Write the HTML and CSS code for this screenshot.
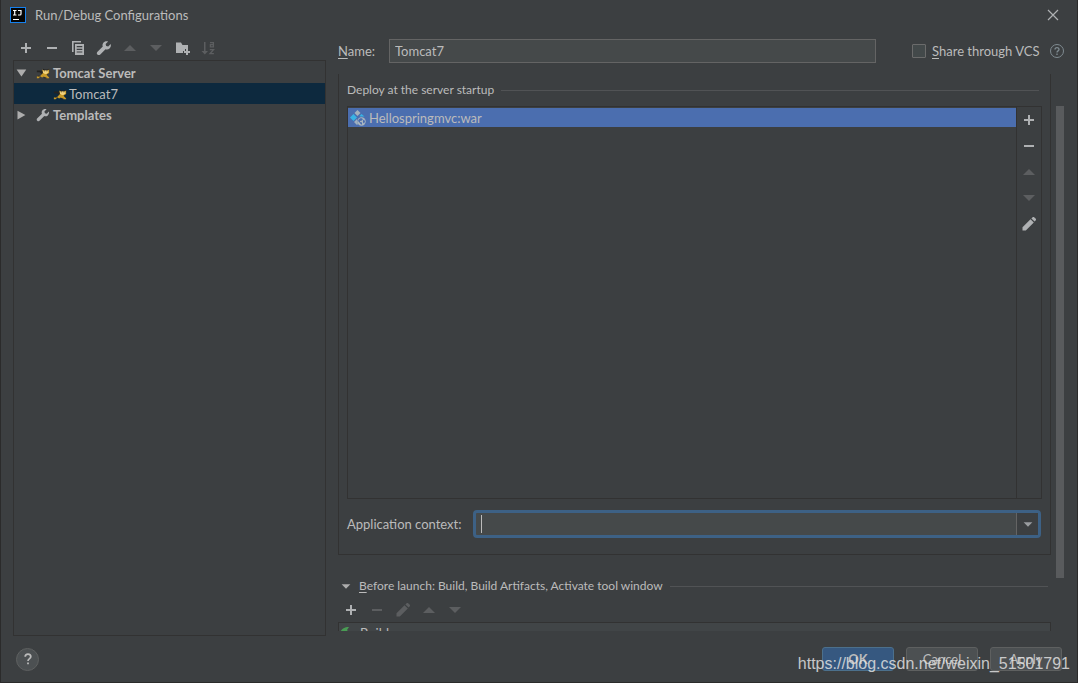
FILE: index.html
```html
<!DOCTYPE html>
<html lang="en">
<head>
<meta charset="utf-8">
<title>Run/Debug Configurations</title>
<link rel="stylesheet" href="styles.css">
</head>
<body>
<svg class="defs" aria-hidden="true">
  <symbol id="add" viewBox="0 0 16 16"><path d="M7 3h2v4h4v2H9v4H7V9H3V7h4z"/></symbol>
  <symbol id="remove" viewBox="0 0 16 16"><path d="M3 7h10v2H3z"/></symbol>
  <symbol id="up" viewBox="0 0 16 16"><path d="M8 5l6 6H2z"/></symbol>
  <symbol id="down" viewBox="0 0 16 16"><path d="M2 5h12l-6 6z"/></symbol>
  <symbol id="expanded" viewBox="0 0 16 16"><path d="M3 4h11l-5.500 8z"/></symbol>
  <symbol id="collapsed" viewBox="0 0 16 16"><path d="M4 3l9 5-9 5z"/></symbol>
  <symbol id="small-down" viewBox="0 0 16 16"><path d="M3 6h10l-5 5z"/></symbol>
  <symbol id="edit" viewBox="0 0 16 16"><path d="M1.500 11.200l8-8 3.300 3.300-8 8H1.500zM10.400 2.400l1-1c.6-.6 1.400-.6 2 0l1.200 1.200c.6.6.6 1.400 0 2l-1 1z"/></symbol>
  <symbol id="copy" viewBox="0 0 16 16"><path d="M2 1h9v1.600H3.600V12H2z"/><path fill-rule="evenodd" d="M5 4h9v11H5zM6.700 6v1.200h5.600V6zm0 2.700v1.200h5.600V8.700zm0 2.700v1.200h5.600v-1.200z"/></symbol>
  <symbol id="wrench" viewBox="0 0 16 16"><path d="M14.700 4.100l-2.500 2.400-2-.6-.6-2 2.500-2.500C10.100.8 8.200 1.400 7.200 2.900c-.8 1.200-.9 2.500-.4 3.700L1.500 11.700c-.9.900-.9 2-.1 2.800s2 .8 2.900-.1l5.200-5.200c1.400.5 2.900.3 4-.7 1.200-1.100 1.700-2.800 1.200-4.400z"/></symbol>
  <symbol id="folder" viewBox="0 0 16 16"><path d="M2 2.500h5L8.500 5H14v4h-3v2H9v2H2z"/><path d="M12 9h2v2h2v2h-2v2h-2v-2h-2v-2h2z"/></symbol>
  <symbol id="sort" viewBox="0 0 16 16"><path d="M4 2h1.500v9H8l-3.200 3.500L1.500 11H4z"/><path fill="none" stroke="currentColor" stroke-width="1.300" d="M10 2.600h3.400v4.200H10.400V4.700h3M9.800 9.700h3.700l-3.500 4h3.900"/></symbol>
  <symbol id="tomcat" viewBox="0 0 16 16"><path fill="#242321" d="M1 5h5l2 1V3l2 1h3l2-1v5l-2 2H8L4 7H1z"/><path fill="#c99a28" d="M7 4l2 1h4l2-1v4l-3 2 3 3v1h-3l-3-2-2 1-2-1-2 2H1v-2l4-1 3-3z"/><path fill="#f1d27c" d="M8 5h6v2l-2 2h-2L8 7z"/><path fill="#242321" d="M9 5h1v1H9zm3 0h1v1h-1zM2 11h3v1H2zm7 2h3v1H9z"/></symbol>
  <symbol id="artifact" viewBox="0 0 16 16"><path fill="#a4b1bb" d="M7.500 0l3 3-3 3-3-3z"/><path fill="#39b3e4" d="M3.500 4l3.500 3.500L3.500 11 0 7.500zM11.500 4l3 2.500h-4l-1-.5z"/><path fill="#9fb0bf" d="M7 9l-3 3 3 3 1-1-1-3z"/><circle cx="11.500" cy="11.500" r="4.200" fill="#aab6c0"/><path fill="#4b6eaf" d="M9 9l2-1 2 1-1 1.500-2 .5v1l2 .5v2h-1l-1.500-2L8 11zM14 9.500l1 2-1 2-1-1v-2z"/></symbol>
</svg>

<div class="dialog">
  <header class="titlebar">
    <svg class="logo" viewBox="0 0 16 16" role="img" aria-label="IntelliJ IDEA"><rect width="16" height="16" fill="#1681ee"/><rect x="1" y="1" width="14" height="14" fill="#050505"/><path fill="none" stroke="#fff" stroke-width="1.200" d="M3 3.500h3.500M4.700 3.500v4.500M3 8h3.500M8 3.500h3V7q0 1-1 1H8M3 12.500h6"/></svg>
    <h1 class="title">Run/Debug Configurations</h1>
    <button class="icon-btn close" aria-label="Close"><svg class="icon" viewBox="0 0 16 16"><path fill="none" stroke="currentColor" stroke-width="1.200" d="M3 3l10 10M13 3L3 13"/></svg></button>
  </header>

  <main class="content">
    <section class="sidebar">
      <div class="toolbar">
        <button class="icon-btn" aria-label="Add"><svg class="icon"><use href="#add"/></svg></button>
        <button class="icon-btn" aria-label="Remove"><svg class="icon"><use href="#remove"/></svg></button>
        <button class="icon-btn" aria-label="Copy"><svg class="icon"><use href="#copy"/></svg></button>
        <button class="icon-btn" aria-label="Edit templates"><svg class="icon"><use href="#wrench"/></svg></button>
        <button class="icon-btn" aria-label="Move up" disabled><svg class="icon"><use href="#up"/></svg></button>
        <button class="icon-btn" aria-label="Move down" disabled><svg class="icon"><use href="#down"/></svg></button>
        <button class="icon-btn" aria-label="New folder"><svg class="icon"><use href="#folder"/></svg></button>
        <button class="icon-btn" aria-label="Sort" disabled><svg class="icon"><use href="#sort"/></svg></button>
      </div>
      <ul class="tree">
        <li class="node"><svg class="arrow"><use href="#expanded"/></svg><svg class="node-icon"><use href="#tomcat"/></svg><strong>Tomcat Server</strong></li>
        <li class="node child selected"><svg class="node-icon"><use href="#tomcat"/></svg><span>Tomcat7</span></li>
        <li class="node"><svg class="arrow"><use href="#collapsed"/></svg><svg class="node-icon wrench"><use href="#wrench"/></svg><strong>Templates</strong></li>
      </ul>
    </section>

    <section class="editor">
      <div class="name-row">
        <label class="name-label" for="name"><u>N</u>ame:</label>
        <input class="field" id="name" type="text" value="Tomcat7">
        <input class="check" id="share" type="checkbox">
        <label class="share-label" for="share"><u>S</u>hare through VCS</label>
        <button class="icon-btn hint" aria-label="About sharing"><svg class="icon" viewBox="0 0 16 16"><circle cx="8" cy="8" r="6.500" fill="none" stroke="currentColor"/><path fill="none" stroke="currentColor" stroke-width="1.300" d="M6 6.500c0-2.600 4-2.600 4 0 0 1.400-2 1.400-2 3M8 10.500V12"/></svg></button>
      </div>

      <div class="viewport">
        <div class="pages">
          <div class="deployment">
            <h2 class="rule">Deploy at the server startup</h2>
            <div class="artifacts">
              <ul class="artifact-list">
                <li class="artifact"><svg class="icon"><use href="#artifact"/></svg>Hellospringmvc:war</li>
              </ul>
              <div class="side-tools">
                <button class="icon-btn" aria-label="Add artifact"><svg class="icon"><use href="#add"/></svg></button>
                <button class="icon-btn" aria-label="Remove artifact"><svg class="icon"><use href="#remove"/></svg></button>
                <button class="icon-btn" aria-label="Move up" disabled><svg class="icon"><use href="#up"/></svg></button>
                <button class="icon-btn" aria-label="Move down" disabled><svg class="icon"><use href="#down"/></svg></button>
                <button class="icon-btn" aria-label="Edit artifact"><svg class="icon"><use href="#edit"/></svg></button>
              </div>
            </div>
            <div class="context-row">
              <label class="context-label" for="context">Application context:</label>
              <div class="combo">
                <span class="caret"></span>
                <input class="combo-input" id="context" type="text">
                <button class="combo-btn" aria-label="Show contexts"><svg class="icon"><use href="#small-down"/></svg></button>
              </div>
            </div>
          </div>

          <div class="launch">
            <h2 class="rule"><svg class="launch-arrow"><use href="#small-down"/></svg><span><u>B</u>efore launch: Build, Build Artifacts, Activate tool window</span></h2>
            <div class="toolbar launch-tools">
              <button class="icon-btn" aria-label="Add task"><svg class="icon"><use href="#add"/></svg></button>
              <button class="icon-btn" aria-label="Remove task" disabled><svg class="icon"><use href="#remove"/></svg></button>
              <button class="icon-btn" aria-label="Edit task" disabled><svg class="icon"><use href="#edit"/></svg></button>
              <button class="icon-btn" aria-label="Move up" disabled><svg class="icon"><use href="#up"/></svg></button>
              <button class="icon-btn" aria-label="Move down" disabled><svg class="icon"><use href="#down"/></svg></button>
            </div>
            <ul class="tasks">
              <li class="task"><svg class="icon" viewBox="0 0 16 16"><path fill="#499c54" d="M0 8c1-3 3-6 9-6L7 5l3 4-3 3-3-3-3 3z"/></svg>Build</li>
            </ul>
          </div>
        </div>
        <div class="scrollbar"><div class="thumb"></div></div>
      </div>
    </section>
  </main>

  <footer class="footer">
    <button class="help" aria-label="Help"><svg class="icon" viewBox="0 0 16 16"><path fill="none" stroke="currentColor" stroke-width="2" d="M4.800 5.500c0-4 6.400-4 6.400 0 0 2.200-3.200 2-3.200 4.800M8 12v2"/></svg></button>
    <button class="btn primary">OK</button>
    <button class="btn">Cancel</button>
    <button class="btn">Apply</button>
  </footer>
  <span class="watermark">https://blog.csdn.net/weixin_51501791</span>
</div>
</body>
</html>
```
FILE: styles.css
```css
* { box-sizing: border-box; }

body {
  margin: 0;
  background: #3c3f41;
  color: #bbbbbb;
  font: 13px/20px Lato, "Noto Sans", sans-serif;
}

h1, h2, ul { margin: 0; padding: 0; font-weight: 400; list-style: none; }
button, input { font: inherit; color: inherit; margin: 0; }
u { text-underline-offset: 2px; }
.defs { position: absolute; width: 0; height: 0; }
svg { fill: currentColor; flex: none; }
.icon { display: block; width: 16px; height: 16px; }

.dialog {
  position: relative;
  display: flex;
  flex-direction: column;
  height: 100vh;
  overflow: hidden;
  border: 1px solid #2b2b2b;
  border-top: 0;
}

.titlebar { display: flex; align-items: center; height: 29px; padding: 0 16px 0 9px; }
.logo { width: 16px; height: 16px; }
.title { flex: 1; margin-left: 9px; font-size: 13px; }

.icon-btn {
  display: grid;
  place-items: center;
  width: 26px;
  height: 26px;
  padding: 0;
  border: 0;
  background: none;
  color: #afb1b3;
}
.icon-btn:disabled { color: #5c5e60; }
.close { width: 16px; }

.content { display: flex; flex: 1; min-height: 0; padding: 0 12px; }

.sidebar { display: flex; flex-direction: column; flex: 0 0 313px; }
.toolbar { display: flex; }
.sidebar .toolbar { padding-top: 6px; height: 31px; }
.tree { flex: 1; padding-top: 1px; border: 1px solid #323232; }
.node { display: flex; align-items: center; height: 21px; }
.arrow { width: 14px; height: 14px; color: #adadad; margin-right: 7px; }
.node-icon { width: 14px; height: 14px; margin: 0 3px 0 1px; }
.node.child { padding-left: 38px; }
.child .node-icon { margin-right: 2px; }
.node strong { font-weight: 700; font-size: 13px; }
.wrench { color: #afb1b3; }
.selected { background: #0d293e; }

.editor { display: flex; flex-direction: column; flex: 1; min-width: 0; margin-left: 12px; }
.name-row { display: flex; align-items: center; padding-top: 10px; }
.name-label { width: 51px; }
.share-label { min-width: 110px; }
.field {
  flex: 1;
  min-width: 0;
  height: 24px;
  padding: 0 5px;
  border: 1px solid #646464;
  background: #45494a;
  outline: 0;
}
.check {
  appearance: none;
  width: 14px;
  height: 14px;
  margin: 0 6px 0 36px;
  border: 1px solid #6b6b6b;
  border-radius: 1px;
  background: #43494a;
}
.hint { width: 16px; height: 16px; margin: 0 0 0 7px; color: #7f8b91; }

.viewport { display: flex; flex: 1; min-height: 0; overflow: hidden; margin: 11px 0 5px; }
.pages { flex: 1; min-width: 0; }
.scrollbar { width: 14px; padding: 32px 1px 53px 5px; display: flex; }
.thumb { flex: 1; background: #595b5d; }

.deployment { padding: 6px 8px 16px; border: 1px solid #323232; border-top: 0; }
.rule { display: flex; align-items: center; font-size: 12px; line-height: 20px; }
.rule::after { content: ""; flex: 1; height: 1px; margin-left: 7px; background: #515355; }
.deployment .rule { margin-right: 3px; }
.artifacts { display: flex; height: 393px; margin-top: 6px; border: 1px solid #323232; }
.artifact-list { flex: 1; padding-top: 1px; }
.artifact { display: flex; align-items: center; gap: 3px; height: 19px; padding-left: 2px; background: #4b6eaf; }
.side-tools { width: 25px; border-left: 1px solid #323232; }
.side-tools .icon-btn { width: 24px; }

.context-row { display: flex; align-items: center; gap: 11px; margin: 11px 1px 0 0; }
.context-label { min-width: 114px; }
.combo {
  display: flex;
  flex: 1;
  height: 28px;
  border: 3px solid #3d6185;
  border-radius: 4px;
  background: #45494a;
  outline: 0;
}
.caret { width: 1px; height: 18px; margin: 2px 0 0 5px; background: #bbbbbb; }
.combo-input { flex: 1; min-width: 0; padding: 0 5px; border: 0; background: none; outline: 0; }
.combo-btn {
  display: grid;
  place-items: center;
  width: 22px;
  padding: 0;
  border: 0;
  border-left: 1px solid #646464;
  background: #3c3f41;
  color: #9a9da0;
}
.combo-btn .icon, .launch-arrow { width: 14px; height: 14px; }

.launch { margin-top: 21px; }
.launch .rule { margin-right: 3px; }
.launch-arrow { margin: 0 6px 0 1px; color: #adadad; }
.launch-tools { height: 26px; padding-top: 1px; }
.tasks { border: 1px solid #323232; background: #414547; }
.task { display: flex; align-items: center; gap: 4px; height: 20px; padding-left: 1px; }

.footer { display: flex; align-items: center; gap: 12px; height: 46px; padding: 0 15px; }
.help {
  display: grid;
  place-items: center;
  width: 23px;
  height: 23px;
  margin-right: auto;
  padding: 0;
  border: 1px solid #5e6060;
  border-radius: 50%;
  background: #4c5052;
  color: #bbbbbb;
}
.help .icon { width: 14px; height: 14px; }
.btn {
  width: 72px;
  height: 24px;
  padding: 0;
  border: 1px solid #5e6060;
  border-radius: 3px;
  background: #4c5052;
  line-height: 20px;
}
.btn.primary { border-color: #4c708c; background: #365880; font-weight: 700; }

.watermark {
  position: absolute;
  right: 7px;
  bottom: 8px;
  color: rgba(225, 225, 225, 0.85);
  font: 16px/20px "Liberation Sans", Arial, sans-serif;
  pointer-events: none;
}
```
